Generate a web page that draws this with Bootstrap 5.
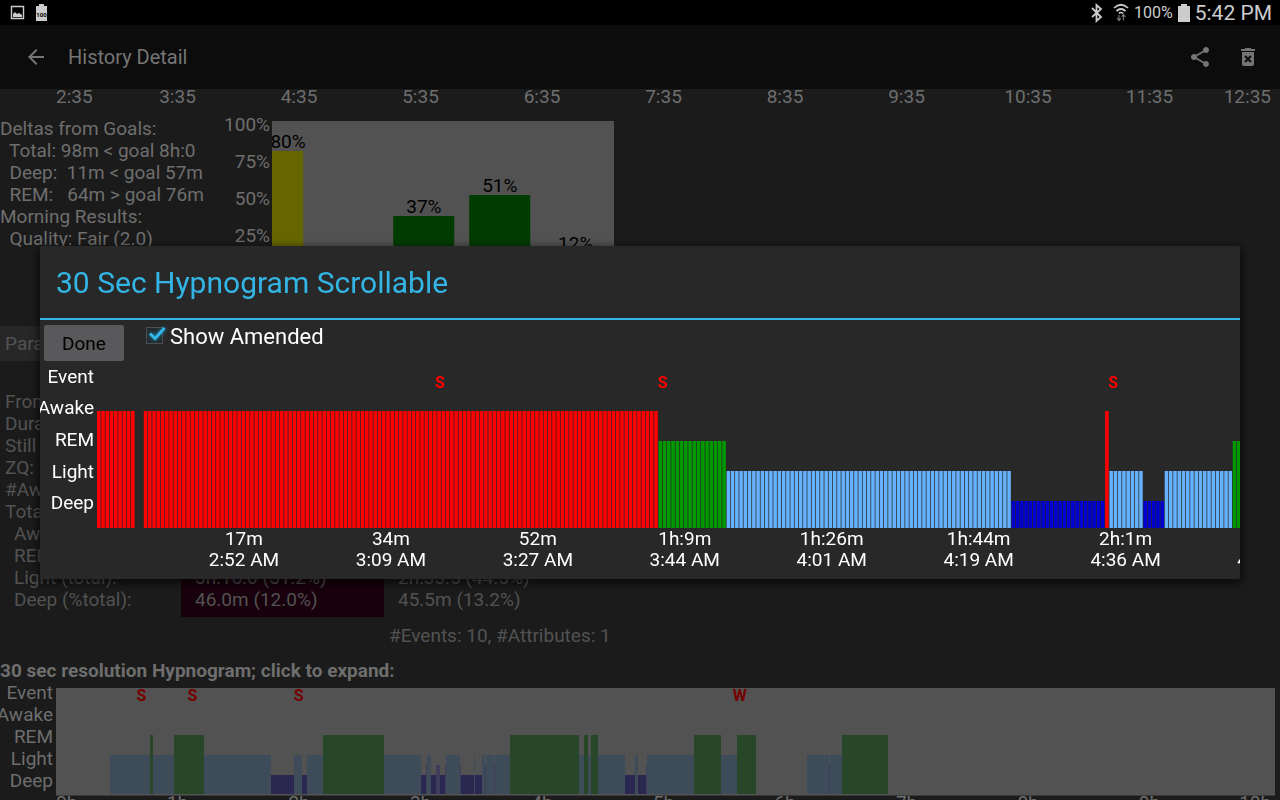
<!DOCTYPE html>
<html lang="en">
<head>
<meta charset="utf-8">
<meta name="viewport" content="width=device-width, initial-scale=1">
<title>History Detail</title>
<link href="https://cdn.jsdelivr.net/npm/bootstrap@5.3.0/dist/css/bootstrap.min.css" rel="stylesheet">
<style>
body{font-family:Roboto,"Noto Sans",sans-serif;font-size:19px;line-height:22px;background:#1b1b1b;color:#6e6e6e}
.status-bar{height:25px;background:#000;color:#ccc}
.status-bar .pct{font-size:16px}
.status-bar .clock{font-size:21px}
.app-bar{height:64px;background:#0c0c0c;padding:0 20px 0 24px}
.app-bar h1{font-size:20px;line-height:24px;margin:0 0 0 20px;font-weight:400;color:#757575}
.icon-btn{border:0;background:none;padding:0;width:24px;height:24px;color:#757575;display:flex}
.hours{display:grid;grid-template-columns:repeat(20,minmax(0,1fr));margin:0 9px 0 56px;line-height:16px;white-space:nowrap}
.hours span{grid-column:span 2;text-align:center}
.hours span:first-child{grid-column:span 1;text-align:left}
.hours span:last-child{grid-column:span 1;display:flex;justify-content:flex-end}
.hours.low{line-height:14px}
.summary{min-height:208px;margin-top:13px}
.goals{width:224px;white-space:pre}
.pct-scale{width:48px;height:186px;padding-right:2px;margin-top:-12px}
.goal-plot{width:342px;height:150px;margin-top:3px;background:#525252;color:#000;overflow:hidden}
.goal-bar{position:absolute;bottom:0;width:18%;background:#003c00;transform:translateX(-50%)}
.goal-bar.amber{background:#666600}
.goal-label{position:absolute;transform:translateX(-50%);line-height:18px}
.stats{color:#525252;width:584px;table-layout:fixed;border-collapse:collapse}
.stats th{font-weight:400}
.stats thead th{background:#272727;height:35px;padding:0 5px}
.stats tbody th,.stats tbody td{padding:0 0 0 14px}
.stats tbody th.top{padding-left:5px}
.stats .hl{background:#19000d}
.stats tr.first>*{padding-top:30px}
.stats tr.last>*{padding-bottom:6px}
.counts{color:#525252;margin:8px 0 0 389px}
.mini-title{font-size:19px;line-height:22px;font-weight:700;margin:13px 0 0;color:#6e6e6e}
.levels{display:flex;flex-direction:column}
.levels span{flex:1 1 0;display:flex;align-items:center;justify-content:flex-end}
.mini .levels{width:56px;height:108px;padding-right:3px}
.mini .plot{height:108px;margin:6px 5px 0 0;background:#525252;border-bottom:1px solid #3a3a3a}
.plot svg,.wide-plot svg{display:block;width:100%}
.plot svg{height:107px}
.flag{position:absolute;transform:translateX(-50%);font-size:16px;line-height:16px;font-weight:700}
.mini .flag{color:#760000;top:0}
.stage{position:fixed;inset:25px 0 0;display:flex;align-items:center;padding:0 40px;z-index:10}
.dialog{background:#282828;color:#fff;border-radius:2px;box-shadow:0 3px 8px 2px rgba(0,0,0,.6);overflow:hidden}
.dialog h2{font-size:30px;line-height:74px;height:74px;padding:0 16px;margin:0;color:#33b5e5;border-bottom:2px solid #33b5e5;font-weight:400}
.tools{height:41px;padding:5px 4px 0}
.btn-done{width:80px;height:36px;background:#59595b;color:#000;border:0;border-radius:2px;font-size:19px;line-height:24px;padding:2px 0 0}
.tools .form-check{margin:0 0 0 22px;padding:0;min-height:0;display:flex;font-size:22px;line-height:24px}
.tools .form-check-input{float:none;margin:2px 7px 0 0;width:17px;height:17px;border:1px solid #4d5052;border-radius:0;background-color:#222a2d;box-shadow:none}
.tools .form-check-input:checked{background-color:#222a2d;border-color:#4d5052;background-image:none}
.tick{position:absolute;left:1px;top:0;filter:drop-shadow(0 0 2px #1687ad);pointer-events:none}
.dialog .levels{width:57px;height:158px;padding-right:3px}
.wide-plot{padding-top:50px}
.wide-plot svg{height:117px}
.wide-plot .flag{color:#f00;top:14px}
.times{display:flex;overflow:hidden;line-height:21px;text-align:center;padding-left:6.43%;height:51px}
.times div{flex:0 0 13.74%;white-space:nowrap}
</style>
</head>
<body>
<div class="vh-100 overflow-hidden d-flex flex-column">
  <div class="status-bar d-flex align-items-center flex-shrink-0">
    <svg class="ms-2" width="44" height="25" viewBox="0 0 44 25" fill="#ccc"><path d="M3.5 6.5h12v12h-12z" fill="none" stroke="#ccc" stroke-width="1.4"/><path d="M5 17v-3l2-2 2 2 2-1 3 2v2z"/><path d="M28 6h3V4h5v2h3v15H28z"/><text x="33.500" y="16.500" font-size="6" font-weight="700" text-anchor="middle" fill="#000">100</text></svg>
    <div class="ms-auto d-flex align-items-center">
      <svg width="46" height="25" viewBox="0 0 46 25" fill="none" stroke="#ccc"><path d="M4 8l9 9-4.500 4V5L13 9l-9 8" stroke-width="1.8"/><g stroke-width="1.7"><path d="M26 8q7-6.500 14 0M28.500 11q4.500-4 9 0"/><path d="M30.800 13.500q2.200-2 4.400 0" stroke-width="1.500"/></g><path d="M31 15v5m-2-2l2 2.500 2-2.500M35.500 20.500V15m-2 2l2-2.500 2 2.500" stroke="#777" stroke-width="1.200"/></svg>
      <span class="pct">100%</span>
      <svg class="mx-1" width="14" height="20" viewBox="0 0 14 20" fill="#ccc"><path d="M1 3h3V1h6v2h3v16H1z"/></svg>
      <span class="clock me-2">5:42 PM</span>
    </div>
  </div>
  <header class="app-bar d-flex align-items-center flex-shrink-0">
    <button class="icon-btn" aria-label="Back"><svg width="24" height="24" viewBox="0 0 24 24" fill="currentColor"><path d="M20 11H7.830l5.590-5.590L12 4l-8 8 8 8 1.410-1.410L7.830 13H20v-2z"/></svg></button>
    <h1>History Detail</h1>
    <div class="ms-auto d-flex gap-4">
      <button class="icon-btn" aria-label="Share"><svg width="24" height="24" viewBox="0 0 24 24" fill="currentColor"><path d="M18 16.080c-.76 0-1.440.3-1.960.77L8.910 12.700c.05-.23.09-.46.09-.7s-.04-.47-.09-.7l7.050-4.110c.54.5 1.250.81 2.040.81 1.660 0 3-1.340 3-3s-1.340-3-3-3-3 1.340-3 3c0 .24.04.47.09.7L8.040 9.810C7.500 9.310 6.790 9 6 9c-1.660 0-3 1.340-3 3s1.340 3 3 3c.79 0 1.500-.31 2.040-.81l7.120 4.160c-.05.21-.08.43-.08.65 0 1.610 1.310 2.920 2.920 2.920s2.920-1.310 2.920-2.920-1.310-2.920-2.920-2.920z"/></svg></button>
      <button class="icon-btn" aria-label="Delete"><svg width="24" height="24" viewBox="0 0 24 24" fill="currentColor"><path d="M6 19c0 1.100.9 2 2 2h8c1.100 0 2-.9 2-2V7H6v12zM19 4h-3.500l-1-1h-5l-1 1H5v2h14V4z"/><path d="M9 11l6 6m0-6l-6 6" stroke="#0c0c0c" stroke-width="2"/></svg></button>
    </div>
  </header>
  <main>
    <div class="hours"><span>2:35</span><span>3:35</span><span>4:35</span><span>5:35</span><span>6:35</span><span>7:35</span><span>8:35</span><span>9:35</span><span>10:35</span><span>11:35</span><span>12:35</span></div>
    <section class="summary d-flex align-items-start">
      <div class="goals">Deltas from Goals:
  Total: 98m &lt; goal 8h:0
  Deep:  11m &lt; goal 57m
  REM:   64m &gt; goal 76m
Morning Results:
  Quality: Fair (2.0)</div>
      <div class="levels pct-scale"><span>100%</span><span>75%</span><span>50%</span><span>25%</span><span>0%</span></div>
      <div class="goal-plot position-relative" id="goals"></div>
    </section>
    <table class="stats">
      <colgroup><col style="width:181px"><col style="width:203px"><col></colgroup>
      <thead><tr><th colspan="3">Parameter</th></tr></thead>
      <tbody>
        <tr class="first"><th class="top">From:</th><td class="hl"></td><td></td></tr>
        <tr><th class="top">Duration:</th><td class="hl"></td><td></td></tr>
        <tr><th class="top">Still awake:</th><td class="hl"></td><td></td></tr>
        <tr><th class="top">ZQ:</th><td class="hl"></td><td></td></tr>
        <tr><th class="top">#Awake:</th><td class="hl"></td><td></td></tr>
        <tr><th class="top">Total:</th><td class="hl"></td><td></td></tr>
        <tr><th>Awake:</th><td class="hl"></td><td></td></tr>
        <tr><th>REM:</th><td class="hl"></td><td></td></tr>
        <tr><th>Light (total):</th><td class="hl">3h:16.0 (51.2%)</td><td>2h:33.5 (44.5%)</td></tr>
        <tr class="last"><th>Deep (%total):</th><td class="hl">46.0m (12.0%)</td><td>45.5m (13.2%)</td></tr>
      </tbody>
    </table>
    <div class="counts">#Events: 10, #Attributes: 1</div>
    <h2 class="mini-title">30 sec resolution Hypnogram; click to expand:</h2>
    <section class="mini d-flex align-items-start">
      <div class="levels flex-shrink-0"><span>Event</span><span>Awake</span><span>REM</span><span>Light</span><span>Deep</span></div>
      <div class="plot position-relative flex-grow-1" id="mini"><svg viewBox="0 0 1219 107" preserveAspectRatio="none" shape-rendering="crispEdges"></svg></div>
    </section>
    <div class="hours low"><span>0h</span><span>1h</span><span>2h</span><span>3h</span><span>4h</span><span>5h</span><span>6h</span><span>7h</span><span>8h</span><span>9h</span><span>10h</span></div>
  </main>
</div>

<div class="stage">
  <div class="dialog w-100" role="dialog" aria-labelledby="dlg-title">
    <h2 id="dlg-title">30 Sec Hypnogram Scrollable</h2>
    <div class="tools d-flex align-items-start">
      <button class="btn btn-done" type="button">Done</button>
      <div class="form-check position-relative">
        <input class="form-check-input" type="checkbox" id="amended" checked>
        <svg class="tick" width="20" height="20" viewBox="0 0 20 20"><path d="M3 8.500l5 5L17.500 3" fill="none" stroke="#33b5e5" stroke-width="3"/></svg>
        <label for="amended">Show Amended</label>
      </div>
    </div>
    <div class="d-flex align-items-start">
      <div class="levels flex-shrink-0"><span>Event</span><span>Awake</span><span>REM</span><span>Light</span><span>Deep</span></div>
      <div class="flex-grow-1 overflow-hidden">
        <div class="wide-plot position-relative" id="wide"><svg viewBox="0 0 268.700 117" preserveAspectRatio="none"></svg></div>
        <div class="times">
          <div>17m<br>2:52 AM</div><div>34m<br>3:09 AM</div><div>52m<br>3:27 AM</div><div>1h:9m<br>3:44 AM</div><div>1h:26m<br>4:01 AM</div><div>1h:44m<br>4:19 AM</div><div>2h:1m<br>4:36 AM</div><div>2h:19m<br>4:54 AM</div>
        </div>
      </div>
    </div>
  </div>
</div>
<script src="https://cdn.jsdelivr.net/npm/bootstrap@5.3.0/dist/js/bootstrap.bundle.min.js"></script>
<script>
const rect = (x, y, w, h, fill) => `<rect x="${x}" y="${y}" width="${w}" height="${h}" fill="${fill}"/>`;
const flags = (id, list) => list.forEach(([t, pct]) =>
  document.getElementById(id).insertAdjacentHTML('beforeend', `<span class="flag" style="left:${pct}%">${t}</span>`));

// Goal bars: centre (%), value, label centre (%)
document.getElementById('goals').innerHTML = [[0, 80, 4.7, 'amber'], [44.4, 37, 44.4, ''], [66.6, 51, 66.6, ''], [88.8, 12, 88.8, '']]
  .map(([c, v, l, k]) => `<div class="goal-bar ${k}" style="left:${c}%;height:${v}%"></div><span class="goal-label" style="left:${l}%;bottom:${v}%">${v}%</span>`).join('');

// Thirty second epochs: stage and run length
const stages = {A: [117, '#ff0000'], R: [87, '#009a00'], L: [57, '#66b2ff'], D: [27, '#0000d0']};
let n = 0, out = '';
for (const [s, len] of [['A', 9], ['', 2], ['A', 121], ['R', 16], ['L', 67], ['D', 22], ['A', 1], ['L', 8], ['D', 5], ['L', 16], ['R', 2]]) {
  for (let i = 0; i < len; i++, n++) if (s) out += rect(n, 117 - stages[s][0], 0.83, stages[s][0], stages[s][1]);
}
document.querySelector('#wide svg').innerHTML = out;
flags('wide', [['S', 30], ['S', 49.5], ['S', 88.9]]);

// Whole night: stage, start, end
const night = {R: [47, '#284728'], L: [67, '#3e4c5a'], M: [77, '#3f3c5c'], D: [87, '#2a2850']};
document.querySelector('#mini svg').innerHTML =
  ('L54-94 R94-97 L97-118 R118-148 L148-215 D215-238 L238-246 D246-251 L251-267 R267-328 L328-365 D365-370 M370-371 L371-375 ' +
   'D375-380 M380-384 D384-389 M389-390 L390-404 M404-405 D405-418 L418-419 D419-426 L426-429 M429-430 L430-438 M438-439 ' +
   'L439-454 R454-523 L523-528 R528-532 L532-535 R535-542 L542-569 D569-579 L579-582 D582-590 M590-591 L591-638 R638-665 ' +
   'L665-681 R681-700 L751-773 M773-774 L774-786 R786-832').split(' ').map(t => {
    const [a, b] = t.slice(1).split('-').map(Number), [y, c] = night[t[0]];
    return rect(a, y, b - a, 106 - y, c);
  }).join('');
flags('mini', [['S', 7], ['S', 11.2], ['S', 19.9], ['W', 56.1]]);
</script>
</body>
</html>
